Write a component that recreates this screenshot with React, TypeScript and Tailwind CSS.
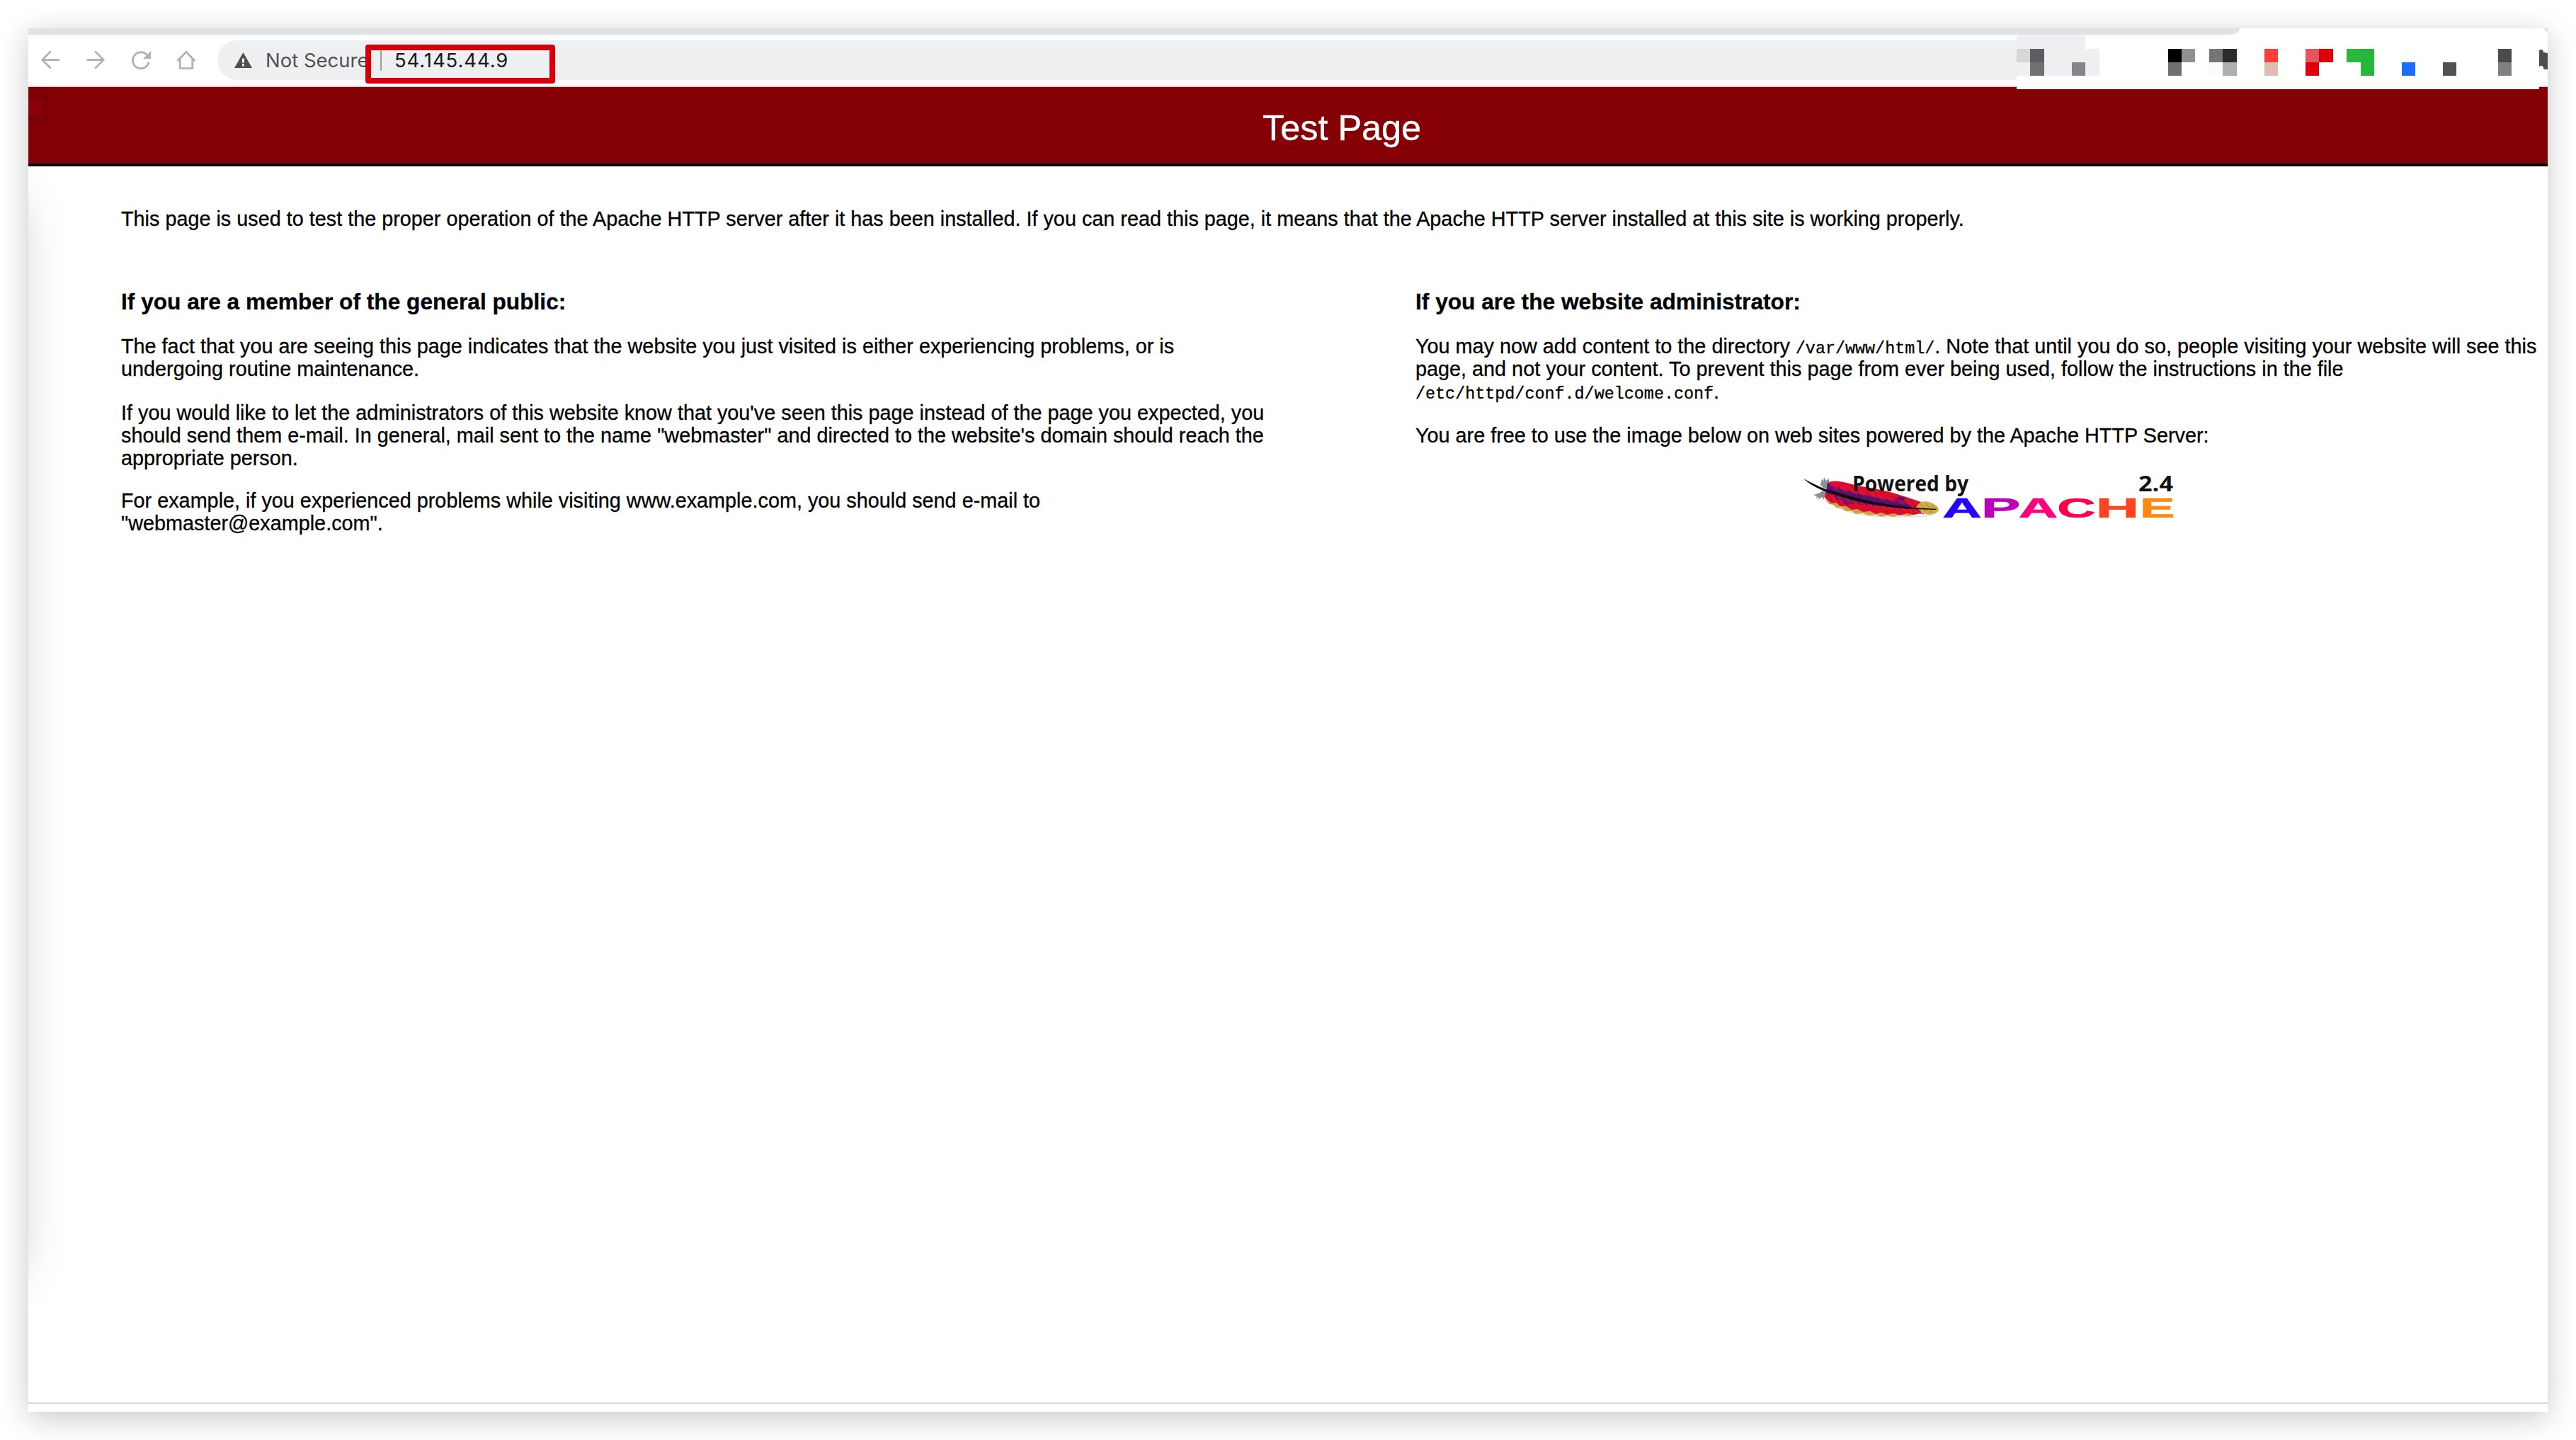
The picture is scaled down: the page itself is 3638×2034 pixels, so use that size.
import React from "react";

type Cell = { row: number; col: number; color: string };

const COLS = 38;
const MOSAIC: Cell[] = [
  { row: 1, col: 0, color: "#d5d6d8" },
  { row: 1, col: 1, color: "#5c5d60" },
  { row: 2, col: 1, color: "#707173" },
  { row: 2, col: 4, color: "#858688" },
  { row: 1, col: 11, color: "#000000" },
  { row: 2, col: 11, color: "#707070" },
  { row: 1, col: 12, color: "#919191" },
  { row: 1, col: 14, color: "#757575" },
  { row: 2, col: 14, color: "#fbfbfb" },
  { row: 1, col: 15, color: "#2c2c2c" },
  { row: 2, col: 15, color: "#aeaeb0" },
  { row: 1, col: 18, color: "#fb3d3d" },
  { row: 2, col: 18, color: "#dfbdb1" },
  { row: 1, col: 21, color: "#e7555f" },
  { row: 2, col: 21, color: "#dc000d" },
  { row: 1, col: 22, color: "#dc000d" },
  { row: 1, col: 24, color: "#2eb73f" },
  { row: 1, col: 25, color: "#27b53a" },
  { row: 2, col: 25, color: "#27b53a" },
  { row: 1, col: 28, color: "#fafcff" },
  { row: 2, col: 28, color: "#1e6dff" },
  { row: 2, col: 31, color: "#525252" },
  { row: 1, col: 35, color: "#4a4a4a" },
  { row: 2, col: 35, color: "#808080" },
];

function cellColor(row: number, col: number) {
  const hit = MOSAIC.find((c) => c.row === row && c.col === col);
  if (hit) return hit.color;
  if (row === 0 && col < 5) return "#eeeff1";
  if ((row === 1 || row === 2) && col < 6) return "#eeeff1";
  return "#ffffff";
}

function Mosaic() {
  const cells = Array.from({ length: COLS * 4 }, (_, i) => i);
  return (
    <div className="absolute left-[2808px] top-[10px] grid h-[76px] w-[738px] grid-cols-[repeat(38,minmax(0,1fr))] grid-rows-4 bg-white">
      {cells.map((i) => (
        <div key={i} style={{ backgroundColor: cellColor(Math.floor(i / COLS), i % COLS) }} />
      ))}
    </div>
  );
}

function NavIcons() {
  return (
    <div className="flex gap-[36px] pl-[17px] text-[#b2b3b4]">
      <svg width="28" height="32" viewBox="0 0 28 32" fill="none" stroke="currentColor" strokeWidth="2.8" strokeLinecap="round" strokeLinejoin="round">
        <path d="M14 4.2 2.6 15.5 14 26.8M3 15.5H25.8" />
      </svg>
      <svg width="28" height="32" viewBox="0 0 28 32" fill="none" stroke="currentColor" strokeWidth="2.8" strokeLinecap="round" strokeLinejoin="round">
        <path d="M14 4.2 25.4 15.5 14 26.8M2.6 15.5H25" />
      </svg>
      <svg width="28" height="32" viewBox="0 0 28 32" fill="none" stroke="currentColor" strokeWidth="2.9" strokeLinecap="round">
        <path d="M22.6 8.6A11.5 11.5 0 1 0 25 19.6" />
        <path d="M28 3v11.2H16.8Z" fill="currentColor" stroke="none" />
      </svg>
      <svg width="28" height="32" viewBox="0 0 28 32" fill="none" stroke="currentColor" strokeWidth="2.9" strokeLinecap="round" strokeLinejoin="round">
        <path d="M2.4 16.2 14 4.4 25.6 16.2" />
        <path d="M5.2 14.5V27.6H22.8V14.5" />
      </svg>
    </div>
  );
}

function BrowserBar() {
  return (
    <div className="relative h-[83px] w-full bg-white">
      <div className="h-[9px] w-[3123px] rounded-br-[14px_9px] bg-[#dfe3e7]" />
      <svg width="6" height="5" viewBox="0 0 6 5" className="absolute right-0 top-0">
        <path d="M0 0H6V5Q2 4 0 0Z" fill="#dfe3e7" />
      </svg>
      <div className="flex h-[72px] items-center">
        <NavIcons />
        <div className="ml-[30px] flex h-[56px] w-[2542px] items-center rounded-l-full bg-[#eeeff1] pl-[24px] font-['Inter'] text-[27.5px] leading-[34px]">
          <svg width="25" height="22" viewBox="0 0 25 22" className="block">
            <path d="M12.5 0 25 22H0Z" fill="#4f5052" />
            <path d="M11 8.5h3v6h-3zM11 16.2h3v3.2h-3z" fill="#eeeff1" />
          </svg>
          <span className="ml-[19px] w-[162px] whitespace-nowrap text-[#505153]">Not Secure</span>
          <span className="h-[30px] w-[2px] bg-[#9c9ea1]" />
          <span className="ml-[18px] whitespace-nowrap tracking-[0.9px] text-[#17181a]">54.145.44.9</span>
        </div>
      </div>
      <div className="h-[2px] w-full bg-[#cfd2d6]" />
      <div className="absolute left-[476px] top-[23px] h-[55px] w-[268px] rounded-[4px] border-[8px] border-[#d2000f]" />
      <Mosaic />
      <svg width="12" height="30" viewBox="0 0 12 30" className="absolute right-0 top-[29px]">
        <path d="M0 2Q3 0 5 2Q6 3 6 5L12 6V29H7Q6 29 6 26Q5 24 3 23.5L0 25Z" fill="#4a4d52" />
      </svg>
    </div>
  );
}

const BARBS = Array.from({ length: 40 }, (_, i) => i);

function Feather() {
  return (
    <g>
      <path d="M24 14 26 5 28 9 29 3 32 8 36 5V20L28 18Z" fill="#84929c" />
      <path d="M29 21 21 26 14 28 19 30 17 33 22 31 21 35 26 31 28 35 33 24Z" fill="#84929c" />
      <path d="M45 44C62 53 90 59 126 59S176 59 187 54" fill="none" stroke="#e2e2e2" strokeWidth="2" />
      <path
        d="M31 34 36 41 42 42 46 46 53 46 60 51 68 51 74 55 84 54 92 57 102 56 110 59 118 57 126 59 136 57 150 58 166 54V45L100 45Z"
        fill="#d4a044"
      />
      <path
        d="M34 12Q36 8 46 8.5C60 10 66 12 75 15L100 19 126 25 145 31 166 38V54L155 56 146 54 136 57 128 54 118 56 110 53 102 55 94 51 84 52 76 48 68 49 60 44 52 44 46 39 40 40 31 33Q29 31 31 27Z"
        fill="#dc0c2c"
      />
      <path
        d="M34 11C44 18 50 19 66 23C82 28 92 28 104 32L128 36 136 30 144 33 140 38 152 42 152 46 106 44 80 42 74 40 60 42 50 35 46 36 44 30 32 25Z"
        fill="#55116e"
      />
      {BARBS.map((i) => {
        const x = 34 + i * 3.3;
        const y = 22 + i * 0.66;
        return (
          <g key={i} fill="none" strokeWidth="1.1">
            <path
              d={`M${x + 6} ${y - 2 + i * 0.03}L${x + 1} ${y - 11 + i * 0.12}`}
              stroke={i % 4 === 0 ? "#7a1266" : "#ee1a34"}
              opacity="0.8"
            />
            <path d={`M${x} ${y + 4}L${x + 7} ${y + 15 - i * 0.2}`} stroke={i % 3 === 0 ? "#9c1050" : "#f01c34"} />
          </g>
        );
      })}
      <path d="M159 46C164 36 172 36 180 39S191 46 191 50C188 55 178 57 171 55Q166 51 159 46Z" fill="#cfae48" />
      <path d="M166 42l4 3m3-5l4 5m3-3l4 4m-14 5l5-2m2 4l5-4" stroke="#9a7a22" strokeWidth="1" />
      <path
        d="M0 5C10 10 20 16 31 19.7C58 28 84 35 106 39C125 42.5 145 45 162 46.4L188 47.8 187 49 160 48.2C140 47.6 120 45.6 104 42.6C78 38.5 52 31 30 22.8C18 18 7 12 0 5Z"
        fill="#15050f"
      />
    </g>
  );
}

const LETTERS = [
  { ch: "A", x: 196.2, sx: 1.95, fill: "#2500ff" },
  { ch: "P", x: 251, sx: 2.11, fill: "#bb00bb" },
  { ch: "A", x: 303.8, sx: 1.95, fill: "#ff007c" },
  { ch: "C", x: 358.2, sx: 1.91, fill: "#ff0048" },
  { ch: "H", x: 412.8, sx: 2.16, fill: "#ff4422" },
  { ch: "E", x: 475.1, sx: 1.88, fill: "#ff8811" },
];

function ApacheLogo() {
  return (
    <svg width="522" height="62" viewBox="0 0 522 62" className="block overflow-visible">
      <Feather />
      <text x="69" y="22.5" textLength="164" lengthAdjust="spacingAndGlyphs" className="font-['Open_Sans'] text-[29.5px] font-bold" fill="#111">
        Powered by
      </text>
      <text x="473" y="22.5" textLength="49" lengthAdjust="spacingAndGlyphs" className="font-['Open_Sans'] text-[30.5px] font-bold" fill="#111">
        2.4
      </text>
      {LETTERS.map((l, i) => (
        <text
          key={i}
          transform={`translate(${l.x} 59.5) scale(${l.sx} 1)`}
          className="font-['Liberation_Sans'] text-[39.3px] font-bold"
          fill={l.fill}
          stroke={l.fill}
          strokeWidth="0.7"
        >
          {l.ch}
        </text>
      ))}
    </svg>
  );
}

function Lines({ className, children }: { className: string; children: React.ReactNode[] }) {
  return (
    <p className={className}>
      {children.map((line, i) => (
        <span key={i} className="block h-[32px] whitespace-nowrap">
          {line}
        </span>
      ))}
    </p>
  );
}

function Mono({ children }: { children: React.ReactNode }) {
  return (
    <span className="font-['Liberation_Mono'] text-[23.4px] leading-none [-webkit-text-stroke:0.3px_black]">{children}</span>
  );
}

export default function App() {
  return (
    <div className="h-[2034px] w-[3638px] overflow-hidden bg-white p-[40px] font-['Liberation_Sans'] text-[28.8px] leading-[32px] text-black">
      <div className="flex h-[1954px] w-[3558px] flex-col bg-white shadow-[0_9px_40px_rgba(0,0,0,0.215)]">
        <div className="relative z-10">
          <BrowserBar />
        </div>
        <header className="relative h-[112px] overflow-hidden border-b-4 border-black bg-[#840004] pl-[1743px] pt-[29px]">
          <div className="absolute left-0 top-0 h-[53px] w-[32px] rounded-br-[8px] border-b border-r border-[#880009] bg-[#7c0006]" />
          <div className="absolute left-0 top-[17px] h-[24px] w-[20px] rounded-r-[3px] bg-[#8a000f]" />
          <h1 className="whitespace-nowrap text-[50.4px] leading-[58px] text-white [-webkit-text-stroke:0.4px_white]">Test Page</h1>
        </header>
        <main className="relative flex-1 overflow-hidden">
          <div className="absolute left-[-220px] top-[50px] h-[1510px] w-[200px] shadow-[0_0_70px_rgba(0,0,0,0.26)]" />
          <div className="relative pl-[131px] pt-[58px] [-webkit-text-stroke:0.3px_black]">
            <p className="whitespace-nowrap">
              This page is used to test the proper operation of the Apache HTTP server after it has been installed. If you can read this page, it means that the Apache HTTP server installed at this site is working properly.
            </p>
            <div className="mt-[83px] flex">
              <section className="w-[1828px]">
                <h2 className="text-[31.68px] font-bold leading-[36px]">If you are a member of the general public:</h2>
                <Lines className="mt-[29px]">
                  {[
                    "The fact that you are seeing this page indicates that the website you just visited is either experiencing problems, or is",
                    "undergoing routine maintenance.",
                  ]}
                </Lines>
                <Lines className="mt-[30px]">
                  {[
                    "If you would like to let the administrators of this website know that you've seen this page instead of the page you expected, you",
                    "should send them e-mail. In general, mail sent to the name \"webmaster\" and directed to the website's domain should reach the",
                    "appropriate person.",
                  ]}
                </Lines>
                <Lines className="mt-[28px]">
                  {[
                    "For example, if you experienced problems while visiting www.example.com, you should send e-mail to",
                    "\"webmaster@example.com\".",
                  ]}
                </Lines>
              </section>
              <section>
                <h2 className="text-[31.68px] font-bold leading-[36px]">If you are the website administrator:</h2>
                <Lines className="mt-[29px]">
                  {[
                    <>
                      You may now add content to the directory <Mono>/var/www/html/</Mono>. Note that until you do so, people visiting your website will see this
                    </>,
                    "page, and not your content. To prevent this page from ever being used, follow the instructions in the file",
                    <>
                      <Mono>/etc/httpd/conf.d/welcome.conf</Mono>.
                    </>,
                  ]}
                </Lines>
                <Lines className="mt-[30px]">
                  {["You are free to use the image below on web sites powered by the Apache HTTP Server:"]}
                </Lines>
                <div className="mt-[40px] pl-[548px] [-webkit-text-stroke:0]">
                  <ApacheLogo />
                </div>
              </section>
            </div>
          </div>
        </main>
        <footer className="h-[13px] border-t-2 border-[#d4d4d9] bg-white" />
      </div>
    </div>
  );
}
